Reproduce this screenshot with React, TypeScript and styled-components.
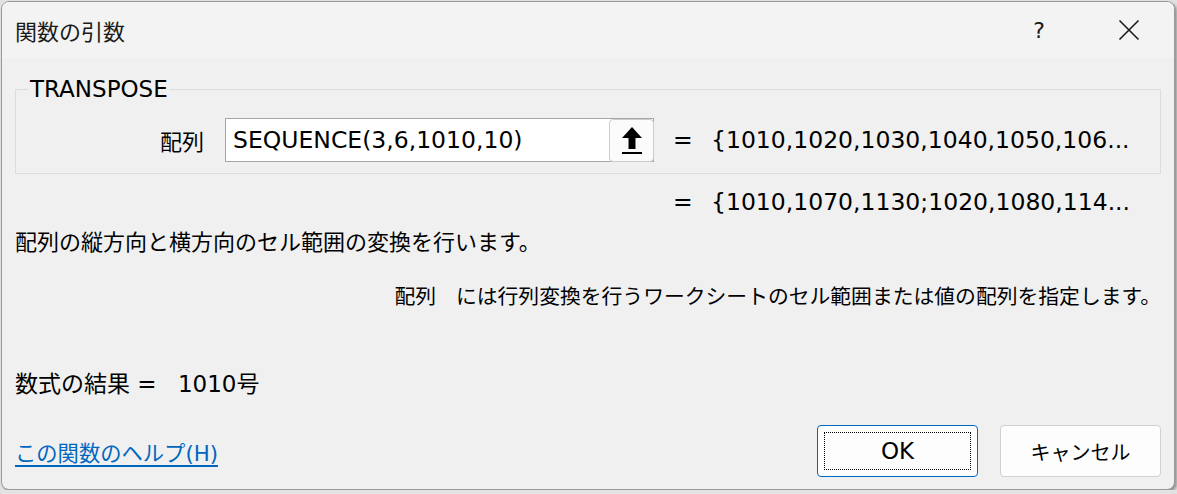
import styled, { createGlobalStyle } from 'styled-components';

const GlobalStyle = createGlobalStyle`
  body {
    margin: 0;
    background: #e2e2e2;
    font-family: "DejaVu Sans", "Noto Sans CJK JP", sans-serif;
    color: #000;
  }
`;

const Window = styled.div`
  box-sizing: border-box;
  width: 1174px;
  height: 489px;
  margin: 1px 0 0 1px;
  border: 1px solid #9a9a9a;
  border-radius: 8px;
  overflow: hidden;
  background: #f0f0f0;
  box-shadow: 2px 2px 3px rgba(0, 0, 0, 0.35);
  display: flex;
  flex-direction: column;
`;

const TitleBar = styled.div`
  height: 56px;
  background: #f3f3f3;
  display: flex;
  align-items: center;
  padding-left: 13px;
`;

const Title = styled.div`
  flex: 1;
  font-family: "Noto Sans CJK JP", sans-serif;
  font-size: 22px;
  line-height: 28px;
  color: #1a1a1a;
`;

const CaptionButton = styled.div`
  width: 90px;
  height: 56px;
  display: flex;
  align-items: center;
  justify-content: center;
  font-family: "DejaVu Sans", sans-serif;
  font-size: 22px;
  color: #1a1a1a;
`;

const Body = styled.div`
  flex: 1;
  padding: 0 13px;
  display: flex;
  flex-direction: column;
`;

const Group = styled.fieldset`
  margin: 19px 0 0;
  padding: 0 0 11px;
  border: 1px solid #dcdcdc;
  min-width: 0;
`;

const Legend = styled.legend`
  margin-left: 12px;
  padding: 0 2px;
  font-size: 23px;
  line-height: 24px;
`;

const ArgRow = styled.div`
  display: flex;
  align-items: center;
  margin-top: 17px;
`;

const ArgLabel = styled.div`
  width: 188px;
  margin-right: 21px;
  text-align: right;
  font-family: "Noto Sans CJK JP", sans-serif;
  font-size: 22px;
`;

const InputBox = styled.div`
  box-sizing: border-box;
  width: 429px;
  height: 44px;
  border: 1px solid #a6a6a6;
  background: #fff;
  display: flex;
`;

const InputText = styled.div`
  flex: 1;
  padding-left: 7px;
  font-size: 23.5px;
  line-height: 42px;
`;

const RefButton = styled.div`
  box-sizing: border-box;
  width: 45px;
  height: 43px;
  margin: 0 -1px -1px 0;
  border: 1px solid #cdcdcd;
  border-radius: 4px;
  background: #fbfbfb;
  display: flex;
  align-items: center;
  justify-content: center;
`;

const Value = styled.div<{ $indent?: number }>`
  margin-left: ${(p) => p.$indent ?? 0}px;
  font-size: 23.5px;
  line-height: 28px;
  white-space: nowrap;
  display: flex;
`;

const Equals = styled.span`
  width: 38px;
`;

const Text = styled.div<{ $size?: number; $top: number; $right?: boolean }>`
  margin-top: ${(p) => p.$top}px;
  font-family: "Noto Sans CJK JP", sans-serif;
  font-size: ${(p) => p.$size ?? 21.5}px;
  line-height: 28px;
  text-align: ${(p) => (p.$right ? 'right' : 'left')};
  white-space: nowrap;
`;

const Gap = styled.span<{ $w: number }>`
  display: inline-block;
  width: ${(p) => p.$w}px;
`;

const Latin = styled.span`
  font-family: "DejaVu Sans", sans-serif;
  font-size: 23px;
`;

const Footer = styled.div`
  margin-top: 27px;
  display: flex;
  align-items: center;
`;

const HelpLink = styled.a`
  flex: 1;
  font-family: "DejaVu Sans", "Noto Sans CJK JP", sans-serif;
  font-size: 21.3px;
  color: #0067c0;
  text-decoration: underline;
  text-underline-offset: 4px;
`;

const Button = styled.div<{ $primary?: boolean }>`
  box-sizing: border-box;
  position: relative;
  width: 161px;
  height: 52px;
  margin-left: 22px;
  border: 1px solid ${(p) => (p.$primary ? '#0067c0' : '#d0d0d0')};
  border-radius: 4px;
  background: #fdfdfd;
  display: flex;
  align-items: center;
  justify-content: center;
  font-family: "DejaVu Sans", "Noto Sans CJK JP", sans-serif;
  font-size: ${(p) => (p.$primary ? 23 : 20)}px;
`;

const FocusRing = styled.div`
  position: absolute;
  inset: 6px;
  border: 1px dotted #000;
`;

const UpArrow = () => (
  <svg width="22" height="28" viewBox="0 0 22 28">
    <path d="M11 0 L21 11 L14.5 11 L14.5 22 L7.5 22 L7.5 11 L1 11 Z" fill="#000" />
    <rect x="1" y="25" width="20" height="2" fill="#000" />
  </svg>
);

const CloseIcon = () => (
  <svg width="22" height="22" viewBox="0 0 22 22">
    <path d="M1.5 1.5 L20.5 20.5 M20.5 1.5 L1.5 20.5" stroke="#1a1a1a" strokeWidth="1.6" fill="none" />
  </svg>
);

export default function App() {
  return (
    <>
      <GlobalStyle />
      <Window>
        <TitleBar>
          <Title>関数の引数</Title>
          <CaptionButton>?</CaptionButton>
          <CaptionButton>
            <CloseIcon />
          </CaptionButton>
        </TitleBar>
        <Body>
          <Group>
            <Legend>TRANSPOSE</Legend>
            <ArgRow>
              <ArgLabel>配列</ArgLabel>
              <InputBox>
                <InputText>SEQUENCE(3,6,1010,10)</InputText>
                <RefButton>
                  <UpArrow />
                </RefButton>
              </InputBox>
              <Value $indent={19}>
                <Equals>=</Equals>
                {'{1010,1020,1030,1040,1050,106...'}
              </Value>
            </ArgRow>
          </Group>
          <Value $indent={658} style={{ marginTop: 14 }}>
            <Equals>=</Equals>
            {'{1010,1070,1130;1020,1080,114...'}
          </Value>
          <Text $top={10} $size={22}>配列の縦方向と横方向のセル範囲の変換を行います。</Text>
          <Text $top={27} $size={20.8} $right>
            配列<Gap $w={20} />には行列変換を行うワークシートのセル範囲または値の配列を指定します。
          </Text>
          <Text $top={59} $size={23}>
            数式の結果<Latin> = </Latin>
            <Gap $w={14} />
            <Latin>1010</Latin>号
          </Text>
          <Footer>
            <HelpLink>この関数のヘルプ(H)</HelpLink>
            <Button $primary>
              <FocusRing />
              OK
            </Button>
            <Button>キャンセル</Button>
          </Footer>
        </Body>
      </Window>
    </>
  );
}
